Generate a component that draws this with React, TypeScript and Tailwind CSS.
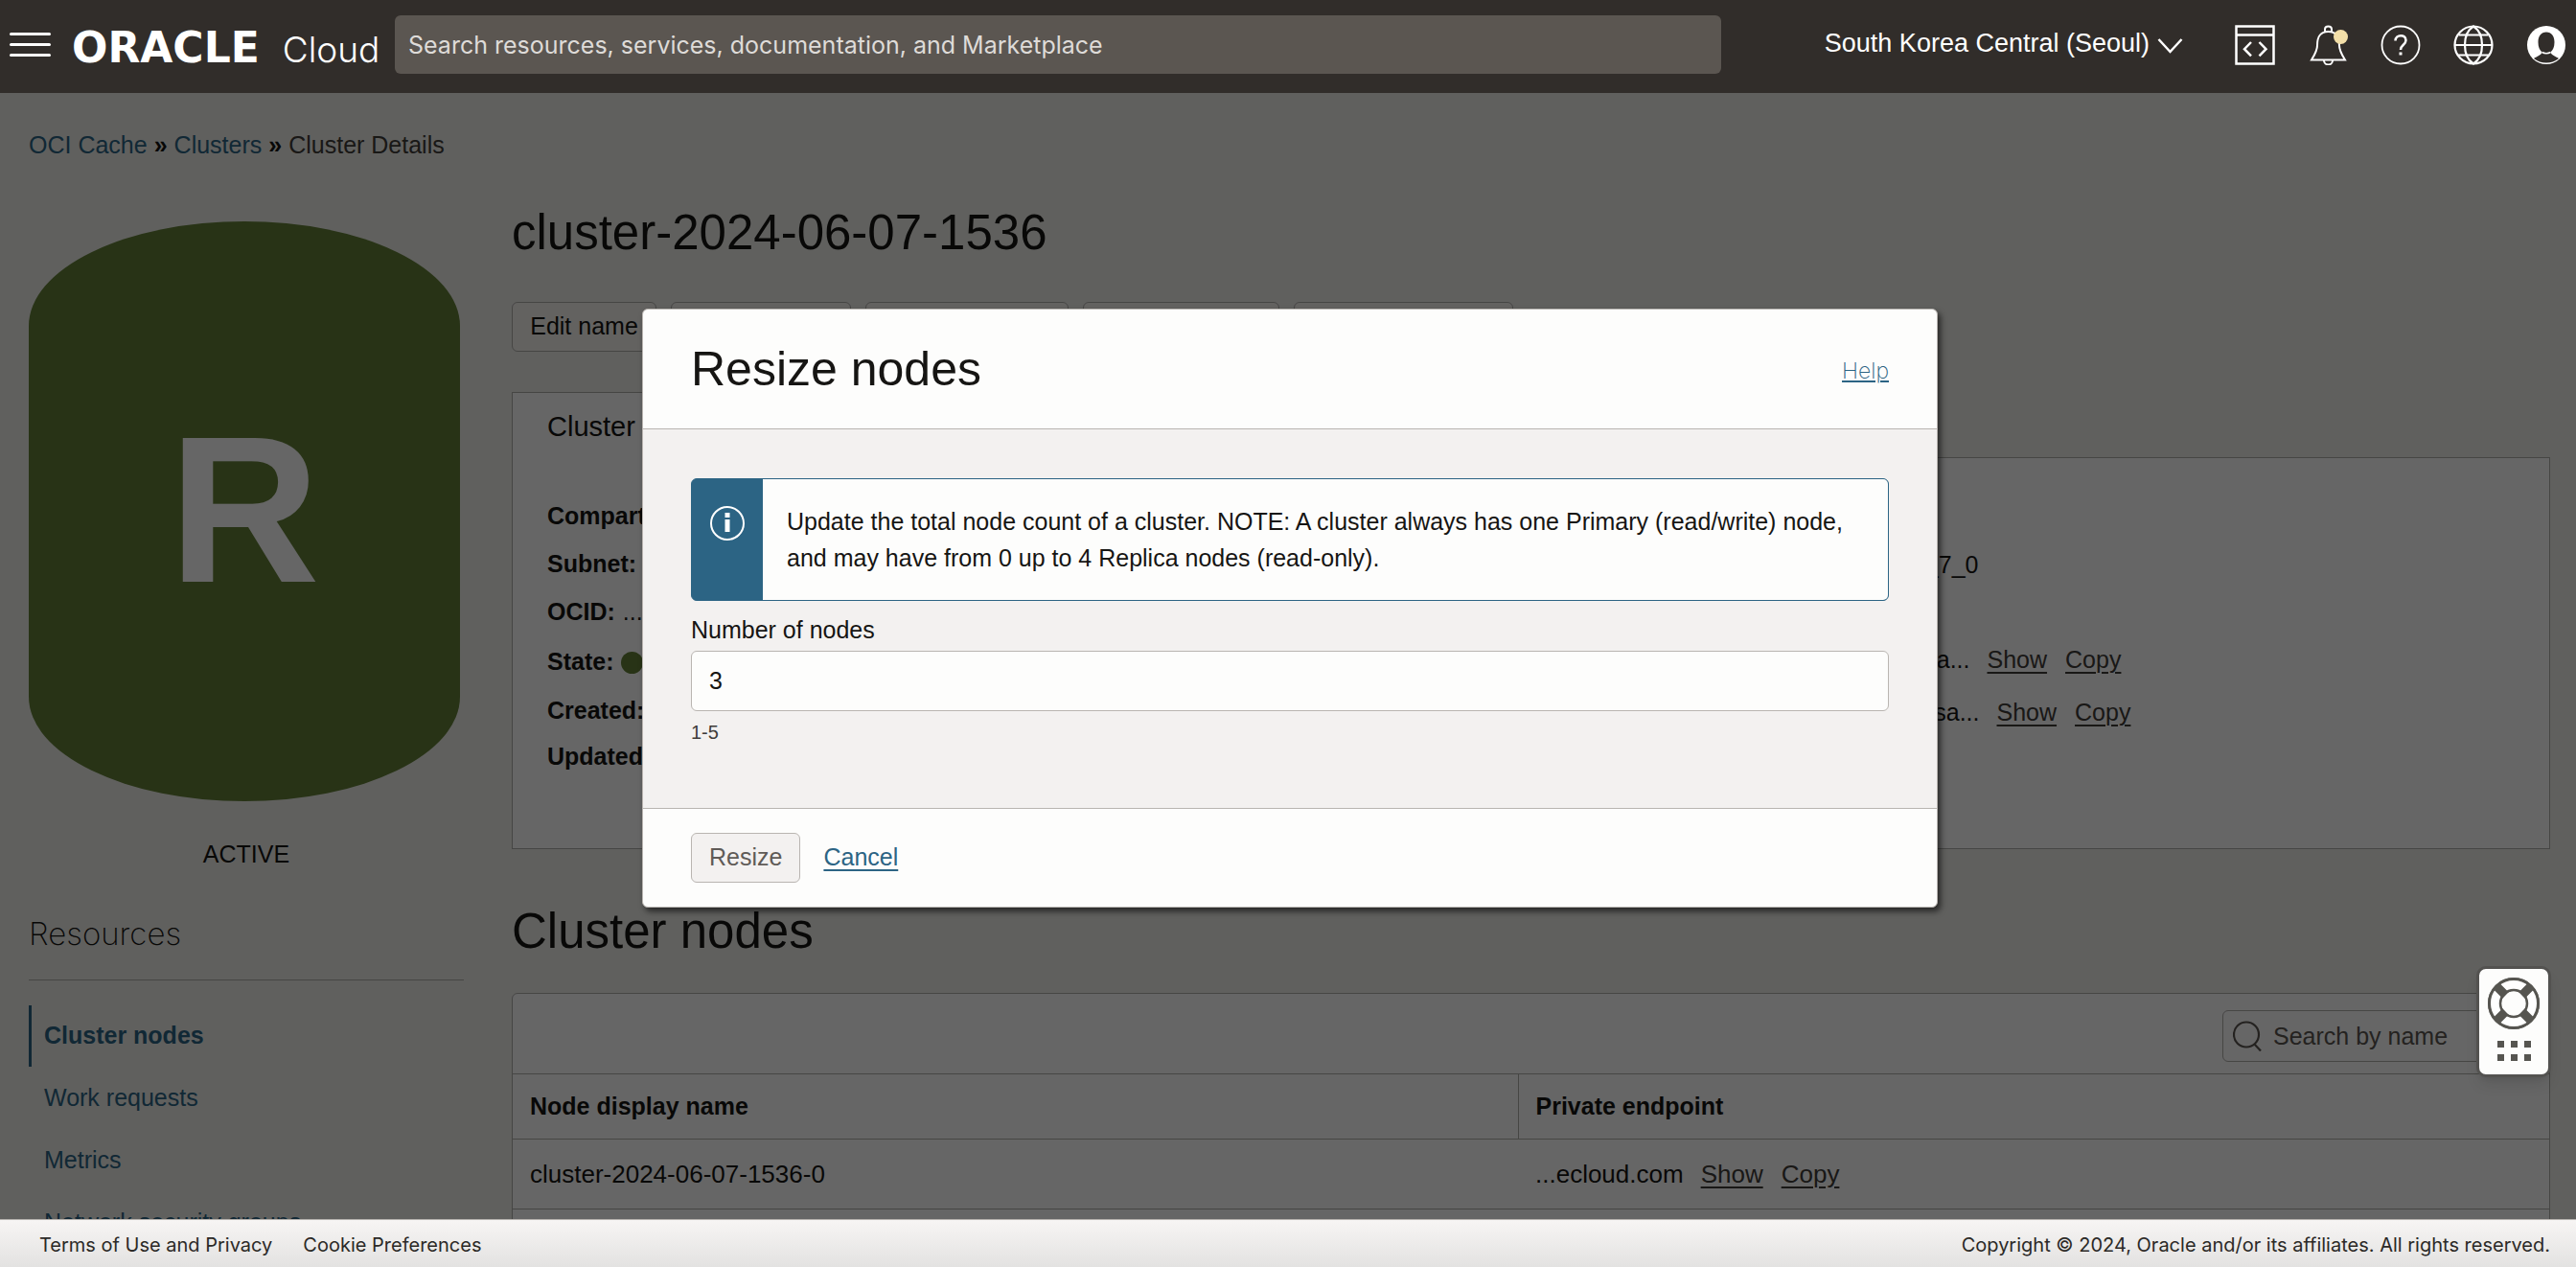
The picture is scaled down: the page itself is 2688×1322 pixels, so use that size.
import React from "react";

const SANS = "font-['Liberation_Sans',Arial,sans-serif]";
const UI = "font-['Inter',sans-serif]";

function DevToolsIcon() {
  return (
    <svg width="42" height="42" viewBox="0 0 42 42" fill="none" stroke="#fff" aria-hidden="true">
      <rect x="1.5" y="1.5" width="39" height="39" strokeWidth="2.5" />
      <path d="M1 10.5h40" strokeWidth="2.5" />
      <path d="M17 18l-7 7.200 7 7.200M25.500 18l7 7.200-7 7.200" strokeWidth="2.5" />
    </svg>
  );
}

function BellIcon() {
  return (
    <svg width="42" height="42" viewBox="0 0 42 42" fill="none" stroke="#fff" strokeWidth="2" aria-hidden="true">
      <path d="M18 7.500V4.500c0-4 7-4 7 0v3" />
      <path d="M4 36.500c3-5 6-9.500 6-15 0-8 2-14.500 11.500-14.500s11.500 6.500 11.500 14.500c0 5.500 3 10 6 15z" />
      <path d="M17 37c0 6 9 6 9 0" />
      <circle cx="34.500" cy="12.500" r="7.500" fill="#f3dfa8" stroke="none" />
    </svg>
  );
}

function HelpIcon() {
  return (
    <svg width="42" height="42" viewBox="0 0 42 42" fill="none" stroke="#fff" aria-hidden="true">
      <circle cx="21" cy="21" r="19.500" strokeWidth="1.800" />
      <path d="M15.500 16.500c.3-7 11-7 11-.5 0 5-5.500 4.500-5.500 10" strokeWidth="2.500" />
      <path d="M19.500 28.500h3v3h-3z" fill="#fff" stroke="none" />
    </svg>
  );
}

function GlobeIcon() {
  return (
    <svg width="42" height="42" viewBox="0 0 42 42" fill="none" stroke="#fff" strokeWidth="2.200" aria-hidden="true">
      <circle cx="21" cy="21" r="19.500" />
      <path d="M21 1.500C9 9 9 33 21 40.500C33 33 33 9 21 1.500z" />
      <path d="M5.500 10.500h31M1.500 21h39M4.500 31.500h33" />
    </svg>
  );
}

function UserIcon() {
  return (
    <svg width="42" height="42" viewBox="0 0 42 42" aria-hidden="true">
      <circle cx="21" cy="21" r="20" fill="#fff" />
      <path
        d="M21 7.500c5.500 0 8.500 4.500 8.500 10.500 0 5-1.500 8-4 10.500 1 3.500 6 4.500 8.500 6.500-7.500 6-18.500 6-26 0 2.500-2 7.500-3 8.500-6.500-2.500-2.500-4-5.500-4-10.500 0-6 3-10.500 8.500-10.500z"
        fill="#312d2a"
      />
      <path d="M16.500 28.500q4.500 2.500 9 0" stroke="#fff" strokeWidth="1.500" fill="none" />
    </svg>
  );
}

function LifeRingIcon() {
  return (
    <svg width="54" height="54" viewBox="0 0 54 54" fill="none" stroke="#565550" aria-hidden="true">
      <circle cx="27" cy="27" r="20" strokeWidth="14" />
      <g stroke="#fff" strokeWidth="9.500">
        <path d="M14.400 12.400A19.300 19.300 0 0 1 39.600 12.400" transform="rotate(0 27 27)" />
        <path d="M14.400 12.400A19.300 19.300 0 0 1 39.600 12.400" transform="rotate(90 27 27)" />
        <path d="M14.400 12.400A19.300 19.300 0 0 1 39.600 12.400" transform="rotate(180 27 27)" />
        <path d="M14.400 12.400A19.300 19.300 0 0 1 39.600 12.400" transform="rotate(270 27 27)" />
      </g>
      <path d="M9 9l9.500 9.500M45 9l-9.500 9.500M9 45l9.500-9.500M45 45l-9.500-9.500" strokeWidth="9" />
      <circle cx="27" cy="27" r="26" strokeWidth="2" />
      <circle cx="27" cy="27" r="14" strokeWidth="2.500" />
    </svg>
  );
}

function TopBar() {
  return (
    <header className={`flex h-[97px] shrink-0 items-center bg-[#312d2a] pb-1 pr-[10px] text-white ${SANS}`}>
      <button aria-label="Open navigation menu" className="ml-[10px] flex w-[43px] shrink-0 flex-col gap-2">
        <span className="h-[3px] w-full rounded-sm bg-white" />
        <span className="h-[3px] w-full rounded-sm bg-white" />
        <span className="h-[3px] w-full rounded-sm bg-white" />
      </button>
      <a href="#home" className={`ml-[22px] flex w-[337px] shrink-0 items-baseline gap-6 pt-2 ${UI}`}>
        <span className="text-[44px]/[48px] font-bold font-['DejaVu_Sans',sans-serif]">ORACLE</span>
        <span className="text-[37px]/[48px] font-light">Cloud</span>
      </a>
      <input
        aria-label="Search"
        placeholder="Search resources, services, documentation, and Marketplace"
        className={`h-[61px] w-[1384px] min-w-0 rounded-md bg-[#5b5651] px-[14px] text-[25px] text-white placeholder:text-[#dedbd8] ${UI}`}
      />
      <div className="ml-auto flex shrink-0 items-center gap-[34px]">
        <button className="mr-[20px] flex items-center gap-2 pb-[2px] text-[27px]">
          South Korea Central (Seoul)
          <svg width="27" height="16" viewBox="0 0 27 16" className="mt-1" fill="none" stroke="#fff" strokeWidth="2.500" aria-hidden="true">
            <path d="M1.500 1l12 13 12-13" />
          </svg>
        </button>
        <button aria-label="Developer tools"><DevToolsIcon /></button>
        <button aria-label="Announcements"><BellIcon /></button>
        <button aria-label="Help menu"><HelpIcon /></button>
        <button aria-label="Language"><GlobeIcon /></button>
        <button aria-label="Profile"><UserIcon /></button>
      </div>
    </header>
  );
}

function ShowCopy() {
  return (
    <span className="ml-[18px] inline-flex gap-[19px] text-[#3f3c39]">
      <a href="#show" className="underline decoration-2 underline-offset-4">Show</a>
      <a href="#copy" className="underline decoration-2 underline-offset-4">Copy</a>
    </span>
  );
}

function Breadcrumb() {
  return (
    <nav aria-label="Breadcrumb" className="flex h-[38px] items-center text-[25px]">
      <a href="#cache" className="text-[#2c6484]">OCI Cache</a>
      <span className="mx-[7px] font-bold">»</span>
      <a href="#clusters" className="text-[#2c6484]">Clusters</a>
      <span className="mx-[7px] font-bold">»</span>
      <span className="text-[#3f3c39]">Cluster Details</span>
    </nav>
  );
}

const resources = ["Work requests", "Metrics", "Network security groups"];

function Sidebar() {
  return (
    <aside className="w-[454px] shrink-0 pt-[60px]">
      <div className="flex h-[605px] w-[450px] items-center justify-center rounded-[50%/18%] bg-[#648038] pb-1 text-[218px] font-bold text-white">
        R
      </div>
      <p className="mt-9 h-[38px] text-center text-[25px]/[38px]">ACTIVE</p>
      <h2 className={`mt-10 border-b border-[#b0aeab] pb-6 text-[33px]/[48px] font-extralight ${UI}`}>Resources</h2>
      <nav aria-label="Resources" className="mt-[26px] flex flex-col text-[25px] text-[#2c6484]">
        <a href="#nodes" className="flex h-16 items-center border-l-[3px] border-[#2c6484] pl-[13px] font-bold">
          Cluster nodes
        </a>
        {resources.map((r) => (
          <a key={r} href="#resource" className="flex h-[65px] items-center pl-4">{r}</a>
        ))}
      </nav>
    </aside>
  );
}

const actions = [
  { label: "Edit name", width: "w-[151px]" },
  { label: "Resize nodes", width: "w-[188px]" },
  { label: "Add replicas", width: "w-[212px]" },
  { label: "Move resource", width: "w-[205px]" },
  { label: "Delete cluster", width: "w-[229px]" },
];

function Details() {
  return (
    <section>
      <h2 className="relative -mb-px flex h-[69px] w-[330px] items-center border border-b-0 border-[#b0aeab] bg-white px-9 pt-1 text-[29px]">
        Cluster information
      </h2>
      <div className="grid h-[409px] grid-cols-2 border border-[#b0aeab] bg-white px-9 pt-9 text-[25px]">
        <dl className="font-bold">
          <div className="flex h-[50px] items-center"><dt>Compartment:</dt></div>
          <div className="flex h-[50px] items-center"><dt>Subnet:</dt></div>
          <div className="flex h-[50px] items-center"><dt>OCID:</dt><dd className="ml-2 font-normal">...</dd></div>
          <div className="flex h-[54px] items-center">
            <dt>State:</dt>
            <dd className="ml-2 size-[23px] rounded-full bg-[#648038]" aria-label="Active" />
          </div>
          <div className="flex h-12 items-center"><dt>Created:</dt></div>
          <div className="flex h-12 items-center"><dt>Updated:</dt></div>
        </dl>
        <div className="pt-[50px]">
          <p className="h-[50px] w-[467px] text-right leading-[50px]">REDIS_7_0</p>
          <p className="mt-[50px] flex h-[50px] items-center">
            <span className="w-[458px] text-right">aaaa...</span>
            <ShowCopy />
          </p>
          <p className="flex h-[60px] items-center">
            <span className="w-[468px] text-right">aaasa...</span>
            <ShowCopy />
          </p>
        </div>
      </div>
    </section>
  );
}

function NodesTable() {
  return (
    <section>
      <h2 className="mt-[54px] text-[51px]/[64px]">Cluster nodes</h2>
      <div className="mt-8 rounded-t-md border border-[#b0aeab] bg-white text-[25px]">
        <div className="flex h-[83px] items-center justify-end pr-[17px] pt-1">
          <label className="flex h-[54px] w-[324px] items-center gap-3 rounded-md border border-[#b0aeab] pl-[10px]">
            <svg width="30" height="32" viewBox="0 0 30 32" fill="none" stroke="#5b5651" strokeWidth="2.200" aria-hidden="true">
              <circle cx="14" cy="14.500" r="13" />
              <path d="M22.500 24.500l6.500 7" />
            </svg>
            <input aria-label="Search by name" placeholder="Search by name" className="w-[220px] min-w-0 pt-[2px] placeholder:text-[#5b5651]" />
          </label>
        </div>
        <table className="w-full text-left">
          <thead>
            <tr className="h-[68px] border-y border-[#b0aeab]">
              <th className="w-[1049px] border-r border-[#b0aeab] pl-[18px] font-bold">Node display name</th>
              <th className="pl-[18px] font-bold">Private endpoint</th>
            </tr>
          </thead>
          <tbody className="text-[26px]">
            <tr className="h-[73px] border-b border-[#b0aeab]">
              <td className="pl-[18px]">cluster-2024-06-07-1536-0</td>
              <td className="pl-[18px]">...ecloud.com<ShowCopy /></td>
            </tr>
          </tbody>
        </table>
        <div className="h-[73px]" />
      </div>
    </section>
  );
}

function ResizeDialog() {
  return (
    <div
      role="dialog"
      aria-modal="true"
      aria-labelledby="dialog-title"
      className="flex w-[1352px] flex-col rounded-md border border-[#b9b5b1] bg-[#fdfdfc] text-[25px] text-[#161513] shadow-[3px_4px_6px_rgba(0,0,0,0.6)]"
    >
      <div className="flex h-[125px] items-center justify-between border-b border-[#b9b5b1] px-[50px]">
        <h2 id="dialog-title" className="text-[50px]">Resize nodes</h2>
        <a href="#help" className={`pt-1 text-[23px] font-extralight text-[#2c6484] underline decoration-2 underline-offset-2 ${UI}`}>Help</a>
      </div>
      <div className="bg-[#f3f1f0] px-[50px] pb-[65px] pt-[51px]">
        <div className="flex rounded-md border border-[#2c6484] bg-[#2c6484]">
          <div className="flex w-[74px] shrink-0 justify-center pt-[28px]">
            <svg width="36" height="36" viewBox="0 0 36 36" fill="none" stroke="#fff" aria-hidden="true">
              <circle cx="18" cy="18" r="17" strokeWidth="2" />
              <path d="M18 7v5M18 14v13" strokeWidth="5" />
            </svg>
          </div>
          <p className="flex-1 rounded-r-[5px] bg-[#fdfdfc] py-[25px] pl-[25px] pr-6 leading-[38px]">
            Update the total node count of a cluster. NOTE: A cluster always has one Primary (read/write) node, and may
            have from 0 up to 4 Replica nodes (read-only).
          </p>
        </div>
        <label htmlFor="node-count" className="mb-[2px] mt-[10px] block h-10 leading-10">Number of nodes</label>
        <input
          id="node-count"
          defaultValue="3"
          className="block h-[63px] w-full rounded-md border border-[#b9b5b1] bg-[#fdfdfc] px-[18px]"
        />
        <p className="mt-2 text-[20px]/[28px] text-[#3f3c39]">1-5</p>
      </div>
      <div className="flex h-[103px] items-center border-t border-[#b9b5b1] px-[50px]">
        <button disabled className="h-[52px] rounded-md border border-[#b9b5b1] bg-[#f3f1f0] px-[18px] text-[#5f5b57]">Resize</button>
        <a href="#cancel" className="ml-6 text-[#2c6484] underline decoration-2 underline-offset-4">Cancel</a>
      </div>
    </div>
  );
}

function SupportWidget() {
  return (
    <button
      aria-label="Support"
      className="absolute right-[26px] top-[911px] flex h-[116px] w-[78px] flex-col items-center rounded-[10px] border-[3px] border-[#535250] bg-[#fdfdfc] pt-[9px] shadow-lg"
    >
      <LifeRingIcon />
      <span className="mt-3 grid grid-cols-3 gap-x-[7px] gap-y-[7px]">
        {[0, 1, 2, 3, 4, 5].map((i) => (
          <span key={i} className="size-[7px] bg-[#565550]" />
        ))}
      </span>
    </button>
  );
}

export default function App() {
  return (
    <div className={`flex h-screen flex-col overflow-hidden bg-[#f0f0ec] text-[#161513] ${SANS}`}>
      <TopBar />
      <div className="relative min-h-0 flex-1 overflow-hidden">
        <main className="h-full overflow-hidden pl-[30px] pr-[27px] pt-[36px]">
          <Breadcrumb />
          <div className="flex gap-[50px]">
            <Sidebar />
            <div className="min-w-0 flex-1 pt-10">
              <h1 className="text-[51px]/[64px]">cluster-2024-06-07-1536</h1>
              <div className="mb-[42px] mt-10 flex gap-[15px] text-[25px]">
                {actions.map((a) => (
                  <button key={a.label} className={`h-[52px] rounded-md border border-[#b0aeab] bg-[#f7f4ef] ${a.width}`}>
                    {a.label}
                  </button>
                ))}
              </div>
              <Details />
              <NodesTable />
            </div>
          </div>
        </main>
        <div className="absolute inset-0 flex items-start justify-center bg-black/60 pl-1 pt-[225px]">
          <ResizeDialog />
        </div>
        <SupportWidget />
      </div>
      <footer
        className={`flex h-[50px] shrink-0 items-center gap-8 border-t border-[#b9b5b1] bg-linear-to-b from-[#f7f5f4] to-[#e3e2e1] pl-[41px] pr-[27px] pt-[2px] text-[20px] text-[#2b2926] ${UI}`}
      >
        <a href="#terms">Terms of Use and Privacy</a>
        <a href="#cookies">Cookie Preferences</a>
        <p className="ml-auto">Copyright © 2024, Oracle and/or its affiliates. All rights reserved.</p>
      </footer>
    </div>
  );
}
